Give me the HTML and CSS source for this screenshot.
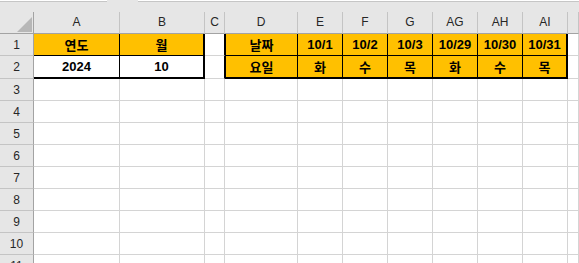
FILE: index.html
```html
<!DOCTYPE html>
<html lang="ko">
<head>
    <meta charset="UTF-8">
    <meta name="viewport" content="width=device-width, initial-scale=1.0">
    <title>Sheet1</title>
    <link rel="stylesheet" href="styles.css">
</head>
<body>
    <div class="toolbar">
        <div class="namebox"></div>
        <div class="formula"></div>
    </div>

    <div class="sheet">
        <div class="row head">
            <div class="corner"></div>
            <div class="col">A</div>
            <div class="col">B</div>
            <div class="col">C</div>
            <div class="col">D</div>
            <div class="col">E</div>
            <div class="col">F</div>
            <div class="col">G</div>
            <div class="col">AG</div>
            <div class="col">AH</div>
            <div class="col">AI</div>
            <div class="col"></div>
        </div>

        <div class="row">
            <div class="rh">1</div>
            <div class="cell hl bk-r bk-b">연도</div>
            <div class="cell hl bk-r2 bk-b">월</div>
            <div class="cell bk-r"></div>
            <div class="cell hl bk-l bk-r bk-b">날짜</div>
            <div class="cell hl bk-r bk-b">10/1</div>
            <div class="cell hl bk-r bk-b">10/2</div>
            <div class="cell hl bk-r bk-b">10/3</div>
            <div class="cell hl bk-r bk-b">10/29</div>
            <div class="cell hl bk-r bk-b">10/30</div>
            <div class="cell hl bk-r2 bk-b">10/31</div>
            <div class="cell"></div>
        </div>

        <div class="row tall">
            <div class="rh">2</div>
            <div class="cell bk-r bk-b2">2024</div>
            <div class="cell bk-r2 bk-b2">10</div>
            <div class="cell bk-r"></div>
            <div class="cell hl bk-l bk-r bk-b2">요일</div>
            <div class="cell hl bk-r bk-b2">화</div>
            <div class="cell hl bk-r bk-b2">수</div>
            <div class="cell hl bk-r bk-b2">목</div>
            <div class="cell hl bk-r bk-b2">화</div>
            <div class="cell hl bk-r bk-b2">수</div>
            <div class="cell hl bk-r2 bk-b2">목</div>
            <div class="cell"></div>
        </div>

        <div class="row"><div class="rh">3</div><div class="cell"></div><div class="cell"></div><div class="cell"></div><div class="cell"></div><div class="cell"></div><div class="cell"></div><div class="cell"></div><div class="cell"></div><div class="cell"></div><div class="cell"></div><div class="cell"></div></div>
        <div class="row"><div class="rh">4</div><div class="cell"></div><div class="cell"></div><div class="cell"></div><div class="cell"></div><div class="cell"></div><div class="cell"></div><div class="cell"></div><div class="cell"></div><div class="cell"></div><div class="cell"></div><div class="cell"></div></div>
        <div class="row"><div class="rh">5</div><div class="cell"></div><div class="cell"></div><div class="cell"></div><div class="cell"></div><div class="cell"></div><div class="cell"></div><div class="cell"></div><div class="cell"></div><div class="cell"></div><div class="cell"></div><div class="cell"></div></div>
        <div class="row"><div class="rh">6</div><div class="cell"></div><div class="cell"></div><div class="cell"></div><div class="cell"></div><div class="cell"></div><div class="cell"></div><div class="cell"></div><div class="cell"></div><div class="cell"></div><div class="cell"></div><div class="cell"></div></div>
        <div class="row"><div class="rh">7</div><div class="cell"></div><div class="cell"></div><div class="cell"></div><div class="cell"></div><div class="cell"></div><div class="cell"></div><div class="cell"></div><div class="cell"></div><div class="cell"></div><div class="cell"></div><div class="cell"></div></div>
        <div class="row"><div class="rh">8</div><div class="cell"></div><div class="cell"></div><div class="cell"></div><div class="cell"></div><div class="cell"></div><div class="cell"></div><div class="cell"></div><div class="cell"></div><div class="cell"></div><div class="cell"></div><div class="cell"></div></div>
        <div class="row"><div class="rh">9</div><div class="cell"></div><div class="cell"></div><div class="cell"></div><div class="cell"></div><div class="cell"></div><div class="cell"></div><div class="cell"></div><div class="cell"></div><div class="cell"></div><div class="cell"></div><div class="cell"></div></div>
        <div class="row"><div class="rh">10</div><div class="cell"></div><div class="cell"></div><div class="cell"></div><div class="cell"></div><div class="cell"></div><div class="cell"></div><div class="cell"></div><div class="cell"></div><div class="cell"></div><div class="cell"></div><div class="cell"></div></div>
        <div class="row"><div class="rh">11</div><div class="cell"></div><div class="cell"></div><div class="cell"></div><div class="cell"></div><div class="cell"></div><div class="cell"></div><div class="cell"></div><div class="cell"></div><div class="cell"></div><div class="cell"></div><div class="cell"></div></div>
    </div>
</body>
</html>
```

FILE: styles.css
```css
* {
    box-sizing: border-box;
}
body {
    margin: 0;
    background: #ffffff;
    font-family: "Liberation Sans", "Noto Sans CJK KR", sans-serif;
    color: #000;
    overflow: hidden;
}
.toolbar {
    display: flex;
    gap: 31px;
    height: 12px;
    background: #e6e6e6;
}
.namebox {
    width: 107px;
    height: 2px;
    background: #fff;
    border-bottom: 1px solid #c6c6c6;
}
.formula {
    flex: 1;
    height: 2px;
    background: #fff;
    border-bottom: 1px solid #c6c6c6;
}
.row {
    display: grid;
    grid-template-columns: 34px 86px 85px 20px 73px repeat(6, 45px) 1fr;
    height: 22px;
}
.row.tall {
    height: 23px;
}
.head .col,
.corner,
.rh {
    background: #e6e6e6;
    color: #262626;
    font-size: 12px;
    display: flex;
    align-items: center;
    justify-content: center;
}
.head .col {
    border-right: 1px solid #c4c4c4;
    border-bottom: 1px solid #a3a3a3;
    padding-bottom: 1px;
}
.corner {
    position: relative;
    border-right: 1px solid #a3a3a3;
    border-bottom: 1px solid #a3a3a3;
}
.corner::after {
    content: "";
    position: absolute;
    right: 1px;
    bottom: 1px;
    width: 15px;
    height: 15px;
    background: #b7b7b7;
    clip-path: polygon(100% 0, 100% 100%, 0 100%);
}
.rh {
    border-right: 1px solid #a3a3a3;
    border-bottom: 1px solid #c4c4c4;
}
.cell {
    border-right: 1px solid #d4d4d4;
    border-bottom: 1px solid #d4d4d4;
    font-size: 13px;
    font-weight: bold;
    display: flex;
    align-items: center;
    justify-content: center;
}
.hl {
    background: #ffc000;
}
.bk-r {
    border-right-color: #000;
}
.bk-r2 {
    border-right: 2px solid #000;
}
.bk-l {
    border-left: 1px solid #000;
}
.bk-b {
    border-bottom-color: #000;
}
.bk-b2 {
    border-bottom: 2px solid #000;
}
```
